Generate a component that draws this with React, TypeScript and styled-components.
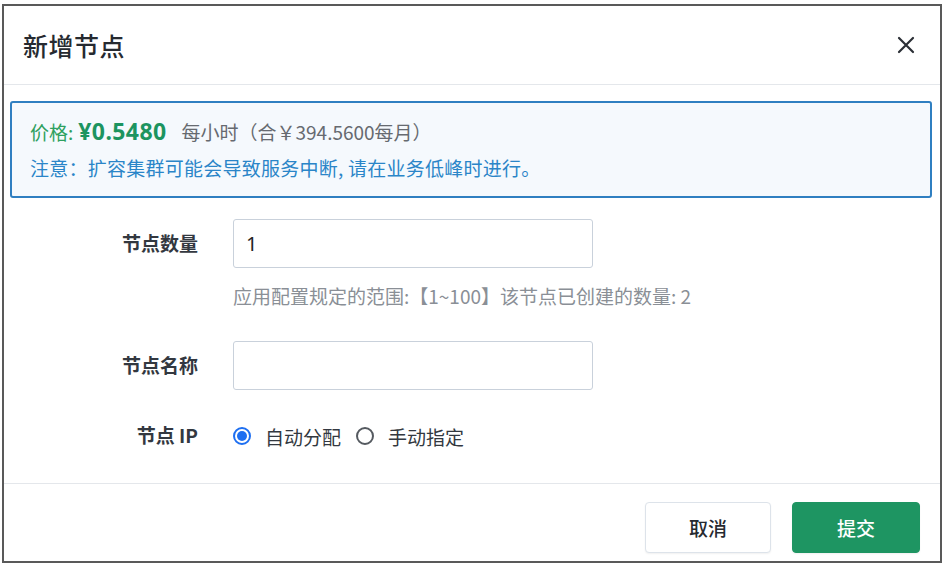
import React, { useState } from "react";
import styled, { createGlobalStyle } from "styled-components";

const Global = createGlobalStyle`
  html, body { margin: 0; padding: 0; background: #ffffff; }
  body { font-family: "Noto Sans", "Noto Sans CJK SC", sans-serif; color: #333; }
  * { box-sizing: border-box; }
`;

const Frame = styled.div`
  margin: 4px 2px 3px 2px;
  width: 940px;
  height: 559px;
  border: 2px solid #595959;
  background: #fff;
  display: flex;
  flex-direction: column;
`;

const Header = styled.div`
  height: 79px;
  border-bottom: 1px solid #e4e7eb;
  display: flex;
  align-items: center;
  justify-content: space-between;
  padding: 0 22px 0 19px;
`;

const Title = styled.h1`
  margin: 0;
  font-family: "Noto Sans CJK SC", sans-serif;
  font-size: 25px;
  font-weight: 500;
  color: #262a30;
  letter-spacing: 0.5px;
`;

const CloseButton = styled.button`
  border: none;
  background: transparent;
  padding: 0;
  width: 24px;
  height: 24px;
  display: flex;
  align-items: center;
  justify-content: center;
  cursor: pointer;
`;

const Alert = styled.div`
  margin: 16px 8px 0 6px;
  height: 97px;
  border: 2px solid #2f7fc1;
  border-radius: 3px;
  background: #f5f9fd;
  padding: 0 18px 2px;
  display: flex;
  flex-direction: column;
  justify-content: center;
  gap: 11px;
  font-family: "Noto Sans CJK SC", sans-serif;
  font-size: 19px;
`;

const PriceLine = styled.div`
  display: flex;
  align-items: baseline;
  color: #666a70;
  line-height: 26px;
`;

const PriceLabel = styled.span`
  color: #2ea05f;
`;

const PriceValue = styled.span`
  color: #1c9460;
  font-family: "Noto Sans", sans-serif;
  font-weight: 700;
  font-size: 23px;
  letter-spacing: 0.4px;
  margin: 0 15px 0 5px;
`;

const Note = styled.div`
  color: #2a85c8;
  line-height: 24px;
  letter-spacing: 0.25px;
`;

const Form = styled.div`
  display: grid;
  grid-template-columns: 194px 360px;
  column-gap: 35px;
  align-items: center;
  padding-top: 21px;
  font-family: "Noto Sans CJK SC", sans-serif;
`;

const Label = styled.div<{ $mt?: number }>`
  text-align: right;
  font-size: 19px;
  font-weight: 700;
  color: #333840;
  margin-top: ${(p) => p.$mt ?? 0}px;
  line-height: 24px;
  padding-bottom: 2px;
`;

const Field = styled.div<{ $mt?: number }>`
  margin-top: ${(p) => p.$mt ?? 0}px;
`;

const Input = styled.input`
  display: block;
  width: 360px;
  height: 49px;
  border: 1px solid #c9d1db;
  border-radius: 3px;
  padding: 0 12px;
  font-family: "Noto Sans", sans-serif;
  font-size: 20px;
  color: #222;
  outline: none;
`;

const Help = styled.div`
  grid-column: 2 / 3;
  margin-top: 16px;
  width: 480px;
  font-size: 19px;
  line-height: 24px;
  color: #8a8f96;
  white-space: nowrap;
`;

const RadioGroup = styled.div`
  display: flex;
  align-items: center;
  height: 24px;
  font-size: 19px;
  color: #333840;
`;

const RadioOption = styled.label`
  display: flex;
  align-items: center;
  gap: 14px;
  margin-right: 15px;
  cursor: pointer;
`;

const RadioCircle = styled.span<{ $on: boolean }>`
  width: 18px;
  height: 18px;
  border-radius: 50%;
  border: 2px solid ${(p) => (p.$on ? "#1e6ff1" : "#555a60")};
  display: flex;
  align-items: center;
  justify-content: center;
  &::after {
    content: "";
    width: 10px;
    height: 10px;
    border-radius: 50%;
    background: #1e6ff1;
    display: ${(p) => (p.$on ? "block" : "none")};
  }
`;

const Footer = styled.div`
  margin-top: auto;
  border-top: 1px solid #e4e7eb;
  display: flex;
  justify-content: flex-end;
  gap: 21px;
  padding: 18px 20px 8px 0;
`;

const Button = styled.button<{ $primary?: boolean }>`
  width: ${(p) => (p.$primary ? 128 : 126)}px;
  height: 51px;
  border-radius: 4px;
  border: 1px solid ${(p) => (p.$primary ? "#1e9562" : "#dde3ea")};
  background: ${(p) => (p.$primary ? "#1e9562" : "#fff")};
  color: ${(p) => (p.$primary ? "#fff" : "#262a30")};
  box-shadow: 0 1px 2px rgba(0, 0, 0, 0.06);
  font-family: "Noto Sans CJK SC", sans-serif;
  font-size: 19px;
  font-weight: 500;
  cursor: pointer;
`;

export default function App() {
  const [mode, setMode] = useState<"auto" | "manual">("auto");
  return (
    <>
      <Global />
      <Frame>
        <Header>
          <Title>新增节点</Title>
          <CloseButton aria-label="close">
            <svg width="18" height="18" viewBox="0 0 18 18">
              <path d="M2 2L16 16M16 2L2 16" stroke="#2b2f36" strokeWidth="2.2" strokeLinecap="round" />
            </svg>
          </CloseButton>
        </Header>
        <Alert>
          <PriceLine>
            <PriceLabel>价格:</PriceLabel>
            <PriceValue>¥0.5480</PriceValue>
            <span>每小时（合￥394.5600每月）</span>
          </PriceLine>
          <Note>注意：扩容集群可能会导致服务中断, 请在业务低峰时进行。</Note>
        </Alert>
        <Form>
          <Label>节点数量</Label>
          <Field>
            <Input defaultValue="1" />
          </Field>
          <Help>应用配置规定的范围:【1~100】该节点已创建的数量: 2</Help>
          <Label $mt={33}>节点名称</Label>
          <Field $mt={33}>
            <Input defaultValue="" />
          </Field>
          <Label $mt={33}>节点 IP</Label>
          <Field $mt={33}>
            <RadioGroup>
              <RadioOption onClick={() => setMode("auto")}>
                <RadioCircle $on={mode === "auto"} />
                自动分配
              </RadioOption>
              <RadioOption onClick={() => setMode("manual")}>
                <RadioCircle $on={mode === "manual"} />
                手动指定
              </RadioOption>
            </RadioGroup>
          </Field>
        </Form>
        <Footer>
          <Button>取消</Button>
          <Button $primary>提交</Button>
        </Footer>
      </Frame>
    </>
  );
}
